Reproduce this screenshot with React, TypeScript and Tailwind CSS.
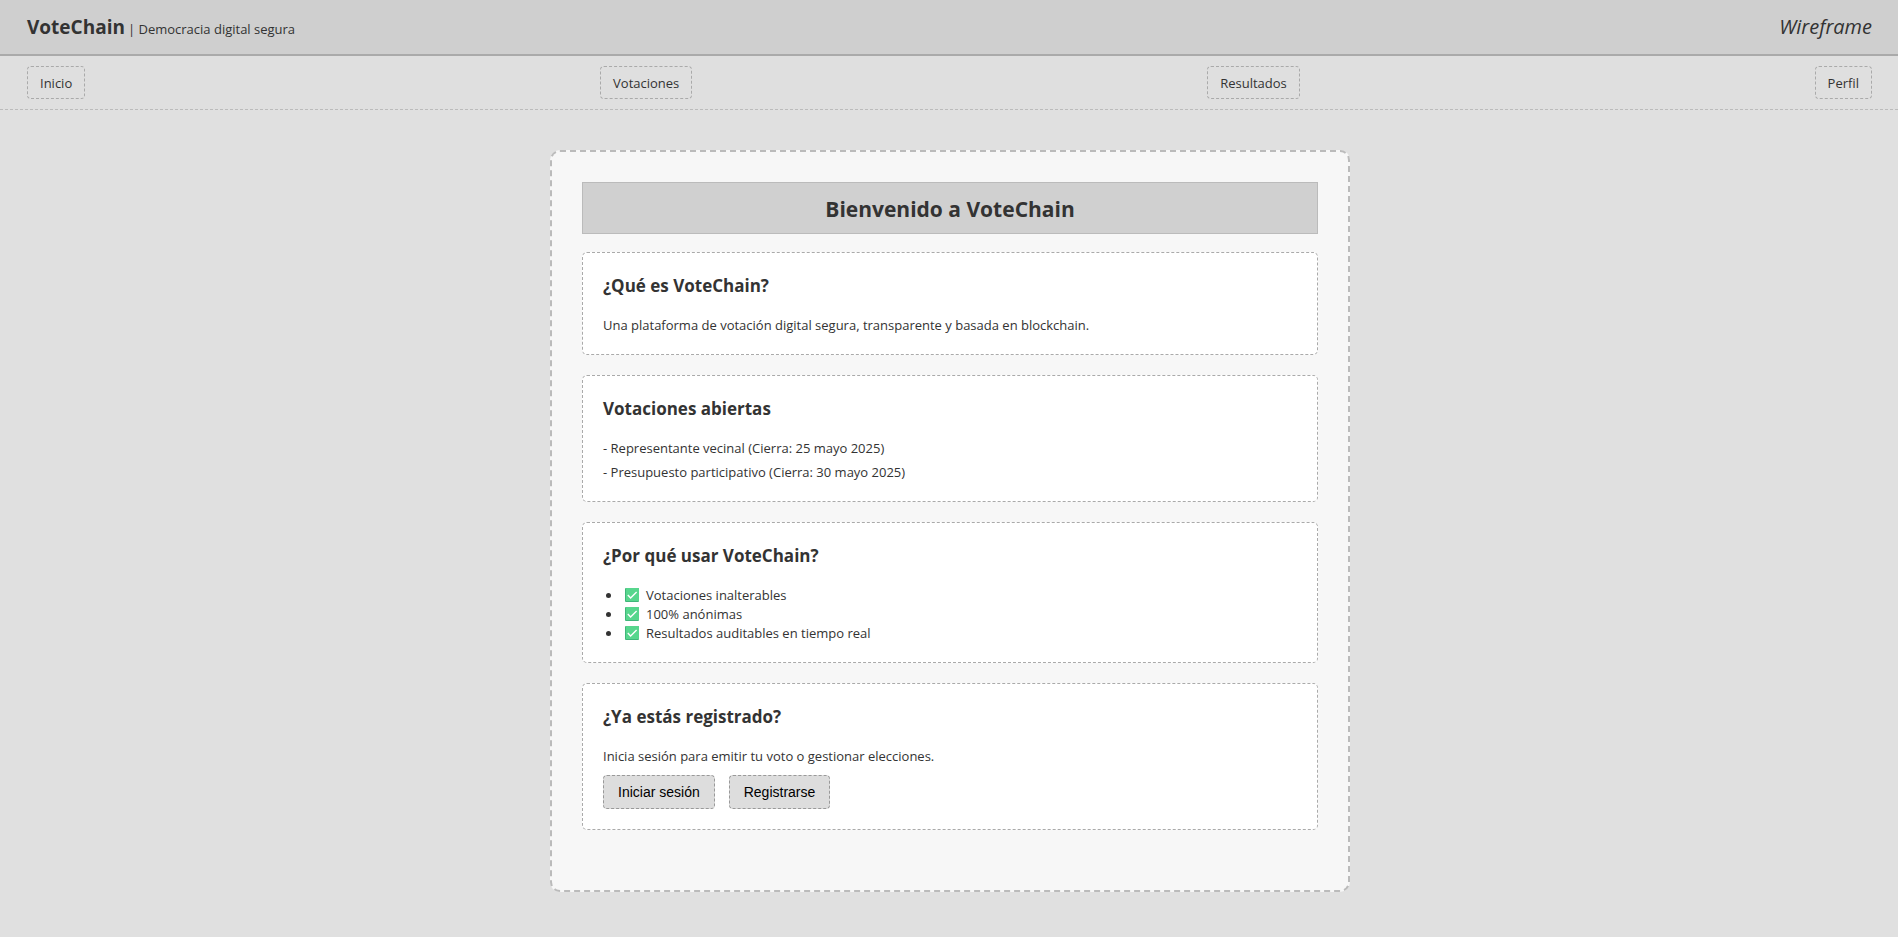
import type { ReactNode } from "react";

const navItems = ["Inicio", "Votaciones", "Resultados", "Perfil"];

const benefits = [
  "Votaciones inalterables",
  "100% anónimas",
  "Resultados auditables en tiempo real",
];

function CheckIcon() {
  return (
    <svg
      viewBox="0 0 14 14"
      className="mb-0.5 h-3.5 w-3.5 shrink-0"
      aria-hidden="true"
    >
      <rect width="14" height="14" rx="1" fill="#3fb67a" />
      <rect x="1" width="13" height="13" rx="0.5" fill="#57d68d" />
      <path
        d="M2.8 7 5.6 9.9 11.6 4"
        fill="none"
        stroke="#fff"
        strokeWidth="1.4"
      />
    </svg>
  );
}

function Section({ title, children }: { title: string; children: ReactNode }) {
  return (
    <section className="rounded-[5px] border border-dashed border-[#aaa] bg-white px-5 pt-[21px] pb-[19px]">
      <h2 className="mb-[18px] text-[17px] leading-6 font-bold">{title}</h2>
      {children}
    </section>
  );
}

function ActionButton({ children }: { children: ReactNode }) {
  return (
    <button
      type="button"
      className="rounded-[4px] border border-dashed border-[#999] bg-[#ddd] px-3.5 py-[7px] font-['Liberation_Sans',Arial,sans-serif] text-sm leading-[18px] text-black"
    >
      {children}
    </button>
  );
}

export default function App() {
  return (
    <div className="min-h-screen bg-[#e0e0e0] font-['Open_Sans','Noto_Sans',sans-serif] text-[13px] leading-[19px] text-[#333]">
      <header className="flex items-center justify-between border-b-2 border-[#aaa] bg-[#cfcfcf] py-[13px] pr-[26px] pl-[27px]">
        <div className="flex items-baseline gap-[3px]">
          <strong className="text-[19px] leading-7 font-bold">VoteChain</strong>
          <span>| Democracia digital segura</span>
        </div>
        <em className="text-[20px] leading-7 italic">Wireframe</em>
      </header>

      <nav className="flex justify-between border-b border-dashed border-[#bbb] bg-[#dfdfdf] py-2.5 pr-[26px] pl-[27px]">
        {navItems.map((item) => (
          <a
            key={item}
            href="#"
            className="rounded-[4px] border border-dashed border-[#aaa] px-3 pt-[7px] pb-[5px]"
          >
            {item}
          </a>
        ))}
      </nav>

      <div className="pt-10 pl-0.5">
        <main className="mx-auto w-full max-w-[800px] rounded-[10px] border-2 border-dashed border-[#bbb] bg-[#f7f7f7] px-[30px] pt-[30px] pb-[60px]">
          <h1 className="mb-[18px] border border-[#bbb] bg-[#d0d0d0] pt-[11px] pb-[9px] text-center text-[21px] leading-[30px] font-bold">
            Bienvenido a VoteChain
          </h1>

          <div className="flex flex-col gap-5">
            <Section title="¿Qué es VoteChain?">
              <p>
                Una plataforma de votación digital segura, transparente y basada
                en blockchain.
              </p>
            </Section>

            <Section title="Votaciones abiertas">
              <div className="flex flex-col gap-[5px]">
                <p>- Representante vecinal (Cierra: 25 mayo 2025)</p>
                <p>- Presupuesto participativo (Cierra: 30 mayo 2025)</p>
              </div>
            </Section>

            <Section title="¿Por qué usar VoteChain?">
              <ul className="pl-[3px]">
                {benefits.map((benefit) => (
                  <li key={benefit} className="flex items-center">
                    <span className="mr-3.5 h-[5px] w-[5px] rounded-full bg-[#333]" />
                    <CheckIcon />
                    <span className="ml-[7px]">{benefit}</span>
                  </li>
                ))}
              </ul>
            </Section>

            <Section title="¿Ya estás registrado?">
              <p>Inicia sesión para emitir tu voto o gestionar elecciones.</p>
              <div className="flex gap-3.5 pt-[9px] pb-px">
                <ActionButton>Iniciar sesión</ActionButton>
                <ActionButton>Registrarse</ActionButton>
              </div>
            </Section>
          </div>
        </main>
      </div>
    </div>
  );
}
